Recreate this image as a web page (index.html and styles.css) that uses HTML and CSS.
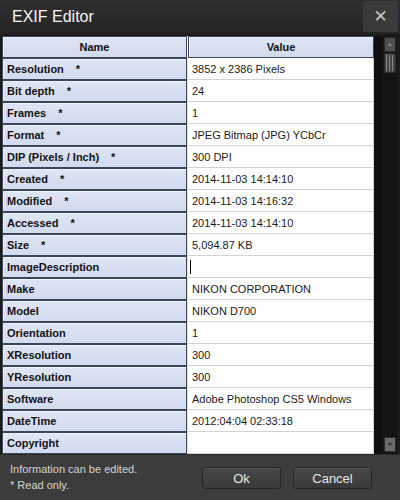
FILE: index.html
```html
<!DOCTYPE html>
<html>
<head>
<meta charset="utf-8">
<link rel="stylesheet" href="styles.css">
</head>
<body>
<div class="window">
  <div class="titlebar">
    <div class="title">EXIF Editor</div>
    <div class="close">✕</div>
  </div>
  <div class="main">
    <div class="grid">
      <div class="hcell">Name</div>
      <div class="hcell hval">Value</div>

      <div class="ncell">Resolution<span class="ro">*</span></div><div class="vcell">3852 x 2386 Pixels</div>
      <div class="ncell">Bit depth<span class="ro">*</span></div><div class="vcell">24</div>
      <div class="ncell">Frames<span class="ro">*</span></div><div class="vcell">1</div>
      <div class="ncell">Format<span class="ro">*</span></div><div class="vcell">JPEG Bitmap (JPG) YCbCr</div>
      <div class="ncell">DIP (Pixels / Inch)<span class="ro">*</span></div><div class="vcell">300 DPI</div>
      <div class="ncell">Created<span class="ro">*</span></div><div class="vcell">2014-11-03 14:14:10</div>
      <div class="ncell">Modified<span class="ro">*</span></div><div class="vcell">2014-11-03 14:16:32</div>
      <div class="ncell">Accessed<span class="ro">*</span></div><div class="vcell">2014-11-03 14:14:10</div>
      <div class="ncell">Size<span class="ro">*</span></div><div class="vcell">5,094.87 KB</div>
      <div class="ncell">ImageDescription</div><div class="vcell edit"><span class="caret"></span></div>
      <div class="ncell">Make</div><div class="vcell">NIKON CORPORATION</div>
      <div class="ncell">Model</div><div class="vcell">NIKON D700</div>
      <div class="ncell">Orientation</div><div class="vcell">1</div>
      <div class="ncell">XResolution</div><div class="vcell">300</div>
      <div class="ncell">YResolution</div><div class="vcell">300</div>
      <div class="ncell">Software</div><div class="vcell">Adobe Photoshop CS5 Windows</div>
      <div class="ncell">DateTime</div><div class="vcell">2012:04:04 02:33:18</div>
      <div class="ncell">Copyright</div><div class="vcell"></div>
    </div>
    <div class="gap"></div>
    <div class="scrollbar">
      <div class="sbtn up"><span class="tri-up"></span></div>
      <div class="thumb"><span></span><span></span><span></span></div>
      <div class="track"></div>
      <div class="sbtn down"><span class="tri-down"></span></div>
    </div>
  </div>
  <div class="footer">
    <div class="notes">
      <div>Information can be edited.</div>
      <div>* Read only.</div>
    </div>
    <div class="buttons">
      <div class="btn">Ok</div>
      <div class="btn">Cancel</div>
    </div>
  </div>
</div>
</body>
</html>
```
FILE: styles.css
```css
html, body {
  margin: 0;
  padding: 0;
  background: #2b2b2b;
}
body {
  font-family: "Liberation Sans", Arial, sans-serif;
}
.window {
  width: 400px;
  height: 500px;
  display: flex;
  flex-direction: column;
  background: #2a2a2a;
}
.titlebar {
  height: 35px;
  display: flex;
  align-items: flex-start;
  justify-content: space-between;
  background: linear-gradient(#303030, #242424);
  box-sizing: border-box;
  border-bottom: 1px solid #1a1a1a;
}
.title {
  color: #f4f4f4;
  font-size: 16px;
  padding-left: 12px;
  padding-top: 8px;
  line-height: 17px;
}
.close {
  width: 35px;
  height: 31px;
  margin-right: 2px;
  margin-top: 1px;
  background: #3a3a3a;
  color: #c4c4c4;
  font-size: 17px;
  font-weight: bold;
  display: flex;
  align-items: center;
  justify-content: center;
  font-family: "DejaVu Sans", sans-serif;
  padding-bottom: 2px;
  box-sizing: border-box;
}
.main {
  height: 419px;
  display: flex;
  flex-direction: row;
  padding: 1px 3px 0 2px;
  box-sizing: border-box;
  background: #1c1c1c;
}
.grid {
  width: 372px;
  display: grid;
  grid-template-columns: 185px 187px;
  grid-auto-rows: 22px;
  background: #ffffff;
  align-content: start;
  overflow: hidden;
  height: 418px;
}
.hcell, .ncell {
  box-sizing: border-box;
  border: 1px solid #3a4759;
  background: linear-gradient(#dfe5f4, #d2daee);
  box-shadow: inset 1px 1px 0 #eef2fb;
  font-size: 11px;
  font-weight: bold;
  color: #111;
  display: flex;
  align-items: center;
}
.hcell {
  justify-content: center;
}
.hval {
  margin-left: 1px;
}
.ncell {
  padding-left: 4px;
  white-space: pre;
}
.ro {
  margin-left: 12px;
}
.vcell {
  box-sizing: border-box;
  border-bottom: 1px solid #d2d2d2;
  border-right: 1px solid #d2d2d2;
  border-left: 1px solid #e2e2e2;
  background: #fff;
  font-size: 11px;
  color: #1a1a1a;
  padding-left: 4px;
  display: flex;
  align-items: center;
}
.vcell.edit {
  padding-left: 2px;
}
.caret {
  display: block;
  width: 1px;
  height: 14px;
  background: #000;
}
.gap {
  width: 8px;
  background: #0f0f0f;
}
.scrollbar {
  width: 15px;
  background: #141414;
  display: flex;
  flex-direction: column;
  align-items: center;
  padding-top: 1px;
  padding-bottom: 2px;
  box-sizing: border-box;
}
.sbtn {
  width: 12px;
  height: 15px;
  box-sizing: border-box;
  background: #4e4e4e;
  border: 1px solid #2a2a2a;
  display: flex;
  align-items: center;
  justify-content: center;
}
.sbtn.down {
  background: #6a6a6a;
}
.tri-up {
  width: 0;
  height: 0;
  border-left: 3px solid transparent;
  border-right: 3px solid transparent;
  border-bottom: 3px solid #7a7a7a;
}
.tri-down {
  width: 0;
  height: 0;
  border-left: 3px solid transparent;
  border-right: 3px solid transparent;
  border-top: 3px solid #3c3c3c;
}
.thumb {
  margin-top: 1px;
  width: 12px;
  height: 20px;
  box-sizing: border-box;
  background: #444;
  border: 1px solid #2a2a2a;
  display: flex;
  justify-content: center;
  gap: 2px;
  padding: 1px 0;
}
.thumb span {
  width: 1px;
  background: #888;
}
.track {
  flex: 1;
}
.footer {
  height: 46px;
  background: #3c3c3c;
  border-top: 1px solid #2c2c2c;
  box-sizing: border-box;
  display: flex;
  justify-content: space-between;
  align-items: flex-start;
}
.notes {
  padding-left: 10px;
  padding-top: 6px;
  color: #d4d4d4;
  font-size: 11px;
  line-height: 16px;
}
.buttons {
  display: flex;
  gap: 12px;
  padding-top: 12px;
  padding-right: 28px;
}
.btn {
  width: 79px;
  height: 22px;
  box-sizing: border-box;
  border: 1px solid #262626;
  border-radius: 3px;
  background: linear-gradient(#474747, #3a3a3a);
  box-shadow: inset 0 1px 0 #555;
  color: #e6e6e6;
  font-size: 13px;
  display: flex;
  align-items: center;
  justify-content: center;
}
```
